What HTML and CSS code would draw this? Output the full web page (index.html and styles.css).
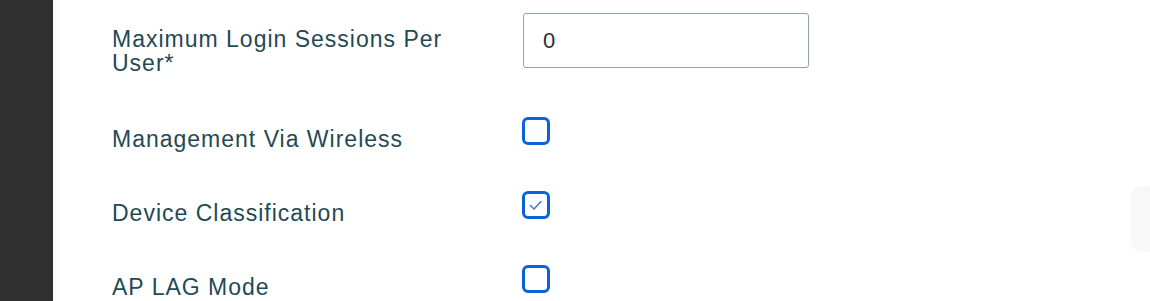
FILE: index.html
```html
<!DOCTYPE html>
<html lang="en">
<head>
  <meta charset="UTF-8">
  <meta name="viewport" content="width=device-width, initial-scale=1.0">
  <title>General</title>
  <link rel="stylesheet" href="styles.css">
</head>
<body>
  <div class="page">
    <div class="sidebar"></div>
    <div class="form">
      <div class="form-row first">
        <label class="form-label" for="max-sessions">Maximum Login Sessions Per User*</label>
        <input class="form-input" id="max-sessions" type="text" value="0">
      </div>
      <div class="form-row">
        <span class="form-label">Management Via Wireless</span>
        <span class="checkbox"></span>
      </div>
      <div class="form-row">
        <span class="form-label">Device Classification</span>
        <span class="checkbox checked">
          <svg viewBox="0 0 22 22" width="22" height="22"><path d="M5.5 11.5 L9 15 L16 7.5" fill="none" stroke="#3d7fdc" stroke-width="1.6" stroke-linecap="round" stroke-linejoin="round"/></svg>
        </span>
      </div>
      <div class="form-row">
        <span class="form-label">AP LAG Mode</span>
        <span class="checkbox"></span>
      </div>
    </div>
    <div class="side-card"></div>
  </div>
</body>
</html>
```

FILE: styles.css
```css
* {
  box-sizing: border-box;
}
body {
  margin: 0;
  background: #fff;
  font-family: "Liberation Sans", Arial, sans-serif;
}
.page {
  position: relative;
  display: flex;
  width: 1150px;
  height: 301px;
  overflow: hidden;
}
.sidebar {
  flex: 0 0 53px;
  background-color: #2f2f2f;
}
.form {
  padding-left: 59px;
}
.form-row {
  display: flex;
  align-items: flex-start;
  height: 74px;
}
.form-row.first {
  height: 100px;
}
.form-label {
  flex: 0 0 410px;
  width: 410px;
  margin-top: 27px;
  padding-right: 70px;
  font-size: 23px;
  line-height: 24px;
  letter-spacing: 1px;
  color: #1f4a55;
}
.form-row.first .form-label {
  margin-top: 27px;
}
.form-input {
  width: 286px;
  height: 55px;
  margin: 13px 0 0 1px;
  padding: 0 19px;
  border: 1px solid #8ea5b1;
  border-radius: 3px;
  font-family: inherit;
  font-size: 22px;
  color: #2a2f33;
  outline: none;
}
.checkbox {
  display: flex;
  align-items: center;
  justify-content: center;
  width: 28px;
  height: 28px;
  margin-top: 17px;
  border: 3px solid #0b61d8;
  border-radius: 6px;
}
.side-card {
  position: absolute;
  left: 1131px;
  top: 186px;
  width: 60px;
  height: 66px;
  border-radius: 10px;
  background-color: #f8f8f8;
}
```
